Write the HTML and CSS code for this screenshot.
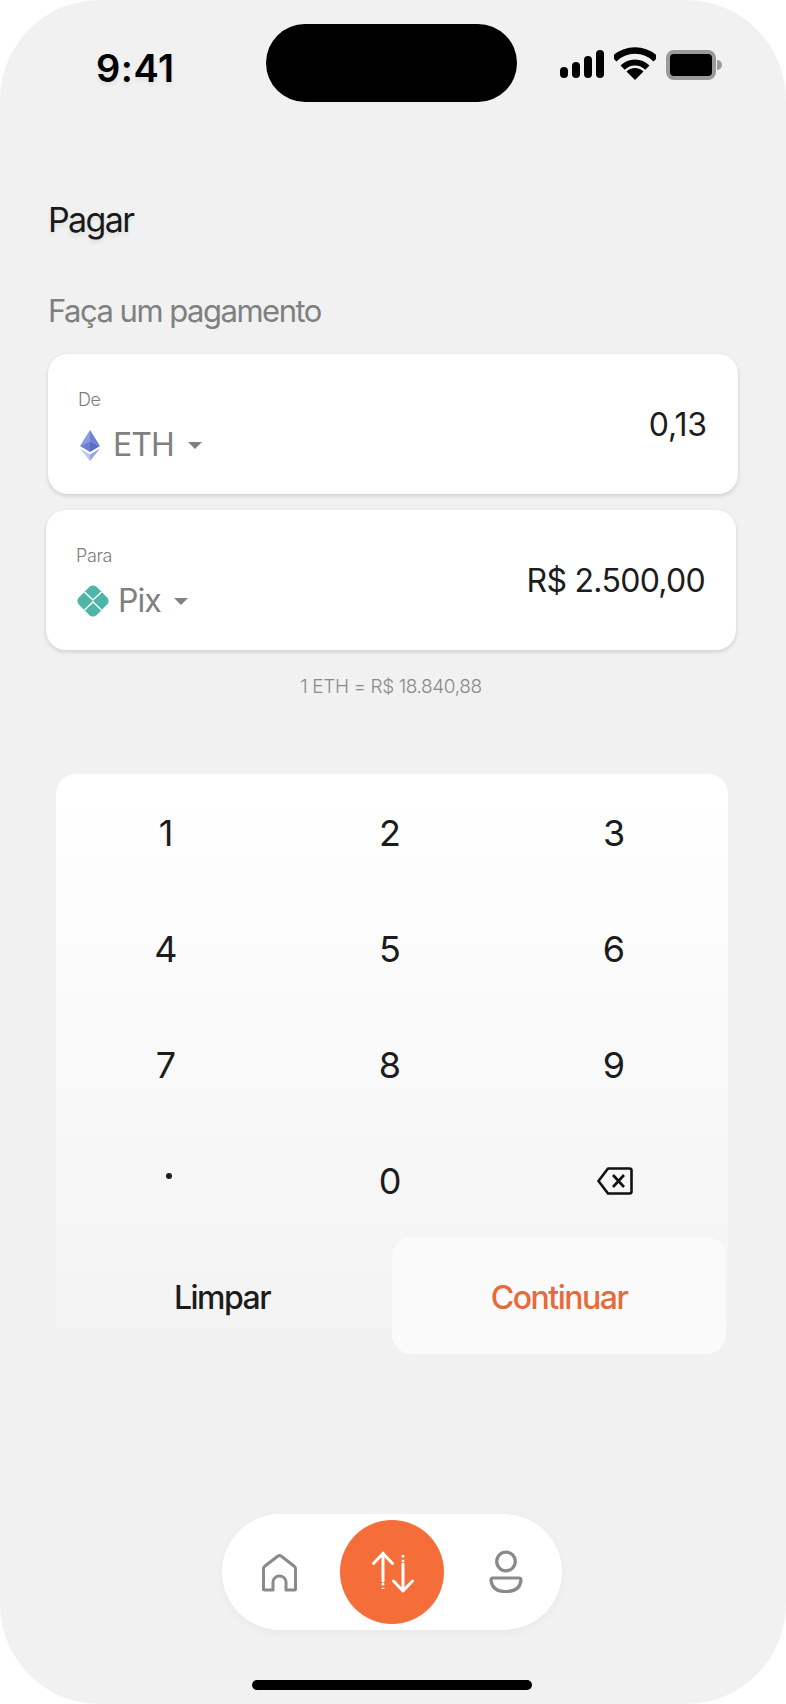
FILE: index.html
```html
<!DOCTYPE html>
<html lang="pt-BR">
<head>
<meta charset="utf-8">
<title>Pagar</title>
<link rel="stylesheet" href="styles.css">
</head>
<body>
<main class="phone">
  <div class="island"></div>
  <header class="status">
    <span class="time">9:41</span>
    <div class="status-icons">
      <svg class="signal" width="44" height="28" viewBox="0 0 44 28"><rect x="0" y="17" width="8" height="11" rx="4"/><rect x="12" y="12" width="8" height="16" rx="4"/><rect x="24" y="6" width="8" height="22" rx="4"/><rect x="36" y="0" width="8" height="28" rx="4"/></svg>
      <svg class="wifi" width="42" height="33" viewBox="0 0 42 33"><path d="M.14 12.14A29.5 29.5 0 0 1 41.86 12.14" fill="none" stroke="#000" stroke-width="6.5"/><path d="M8.63 20.63A17.5 17.5 0 0 1 33.37 20.63" fill="none" stroke="#000" stroke-width="6"/><path d="M21 33 12.5 24.5A12 12 0 0 1 29.5 24.5Z"/></svg>
      <div class="battery"></div>
      <div class="battery-nub"></div>
    </div>
  </header>

  <h1 class="title">Pagar</h1>
  <p class="subtitle">Faça um pagamento</p>

  <section class="card card-from">
    <div class="card-left">
      <span class="card-label">De</span>
      <div class="asset">
        <svg class="eth" width="20" height="31" viewBox="0 0 20 31"><path d="M10 0 0 16 10 11Z" fill="#8a9ae2"/><path d="M10 0 20 16 10 11Z" fill="#6f81d2"/><path d="M10 11 0 16 10 22Z" fill="#6c7ed4"/><path d="M10 11 20 16 10 22Z" fill="#5a6dc6"/><path d="M0 18.5 10 24.5V31Z" fill="#bcc6f0"/><path d="M20 18.5 10 24.5V31Z" fill="#94a3e4"/></svg>
        <span class="asset-name">ETH</span>
        <span class="caret"></span>
      </div>
    </div>
    <span class="amount">0,13</span>
  </section>

  <section class="card card-to">
    <div class="card-left">
      <span class="card-label">Para</span>
      <div class="asset asset-pix">
        <svg class="pix" width="32" height="32" viewBox="0 0 32 32"><rect x="3.5" y="3.5" width="25" height="25" rx="5" transform="rotate(45 16 16)" fill="#4db6a9"/><path d="M7.5 7 16 15 24.5 7M7.5 25 16 17 24.5 25" fill="none" stroke="#fff" stroke-width="1.5"/></svg>
        <span class="asset-name">Pix</span>
        <span class="caret"></span>
      </div>
    </div>
    <span class="amount">R$ 2.500,00</span>
  </section>

  <p class="rate">1 ETH = R$ 18.840,88</p>

  <section class="keypad">
    <div class="keys">
      <span class="key">1</span><span class="key">2</span><span class="key">3</span>
      <span class="key">4</span><span class="key">5</span><span class="key">6</span>
      <span class="key">7</span><span class="key">8</span><span class="key">9</span>
      <span class="key"><span class="dot"></span></span><span class="key">0</span>
      <span class="key">
        <svg class="backspace" width="36" height="28" viewBox="0 0 36 28"><path d="M1.5 14 11 1.5H32.5Q34.5 1.5 34.5 3.5V24.5Q34.5 26.5 32.5 26.5H11Z" fill="none" stroke="#111" stroke-width="2.6" stroke-linejoin="round"/><path d="M16 8 27 20M27 8 16 20" fill="none" stroke="#111" stroke-width="2.6"/></svg>
      </span>
    </div>
    <div class="actions">
      <span class="action">Limpar</span>
      <span class="action action-primary">Continuar</span>
    </div>
  </section>

  <nav class="tabbar">
    <svg width="40" height="44" viewBox="0 0 40 44"><path d="M3.5 19Q3.5 17 5 16L18 6Q19.5 5 21 6L34 16Q35.5 17 35.5 19V39Q35.5 40 34.5 40H26V32A6.5 6 0 0 0 13 32V40H4.5Q3.5 40 3.5 39Z" fill="none" stroke="#8a8a8a" stroke-width="3" stroke-linejoin="round"/></svg>
    <div class="tab-active">
      <svg width="44" height="44" viewBox="0 0 44 44"><g fill="none" stroke="#fff" stroke-width="3"><path d="M13 3V31M3.5 13.5 13 3.5 22.5 13.5M33 41V14M23.5 31 33 41 42.5 31" stroke-linecap="round" stroke-linejoin="round"/><path d="M13 33V39M33 5V12" stroke-width="2.6" stroke-dasharray="2.4 2.4"/></g></svg>
    </div>
    <svg class="tab-profile" width="36" height="44" viewBox="0 0 36 44"><g fill="none" stroke="#8a8a8a" stroke-width="3.2"><circle cx="17" cy="11.5" r="9.3"/><path d="M4 28H30Q32 28 32 30 31 41.5 17 41.5 3 41.5 2 30 2 28 4 28Z" stroke-linejoin="round"/></g></svg>
  </nav>

  <div class="home-bar"></div>
</main>
</body>
</html>
```
FILE: styles.css
```css
* { box-sizing: border-box; }
html, body { margin: 0; padding: 0; background: #fff; }
body { font-family: Inter, "Liberation Sans", sans-serif; color: #1c1c1c; }

.phone {
  position: relative;
  width: 786px;
  height: 1704px;
  background: #f1f1f1;
  border-radius: 100px;
  overflow: hidden;
  display: flex;
  flex-direction: column;
}

.island {
  position: absolute;
  left: 266px;
  top: 24px;
  width: 251px;
  height: 78px;
  background: #000;
  border-radius: 39px;
}

.status {
  height: 120px;
  padding: 46px 64px 0 96px;
  display: flex;
  justify-content: space-between;
  align-items: flex-start;
  flex: none;
}
.time {
  font-size: 38px;
  line-height: 44px;
  font-weight: 600;
  letter-spacing: .5px;
  color: #000;
  text-shadow: 0 3px 4px rgba(0,0,0,.08);
}
.status-icons { display: flex; align-items: flex-start; }
.signal { margin-top: 4px; margin-right: 10px; display: block; }
.wifi { margin-top: 1px; margin-right: 10px; display: block; }
.battery {
  width: 50px;
  height: 30px;
  margin-top: 4px;
  border: 4px solid #9a9a9a;
  border-radius: 8px;
  background: #000;
}
.battery-nub {
  width: 5px;
  height: 10px;
  margin: 14px 0 0 1px;
  background: #9a9a9a;
  border-radius: 0 5px 5px 0;
}

.title {
  margin: 78px 0 0 48px;
  font-size: 34px;
  line-height: 44px;
  font-weight: 400;
  letter-spacing: -1.6px;
  color: #1a1a1a;
  text-shadow: 0 3px 4px rgba(0,0,0,.08);
}
.subtitle {
  margin: 49px 0 0 48px;
  font-size: 31px;
  line-height: 40px;
  letter-spacing: -1.5px;
  color: #808080;
}

.card {
  width: 690px;
  height: 140px;
  flex: none;
  background: #fff;
  border-radius: 20px;
  box-shadow: 0 2px 4px rgba(0,0,0,.14);
  display: flex;
  justify-content: space-between;
  align-items: center;
  padding: 0 31px 0 30px;
}
.card-from { margin: 23px 0 0 48px; }
.card-to { margin: 16px 0 0 46px; }
.card-left { display: flex; flex-direction: column; padding-top: 4px; }
.card-label {
  font-size: 18px;
  line-height: 22px;
  font-weight: 300;
  letter-spacing: -.4px;
  color: #7d7d7d;
}
.asset { display: flex; align-items: center; margin-top: 16px; height: 36px; }
.asset-name {
  font-size: 32px;
  line-height: 36px;
  letter-spacing: -1px;
  color: #808080;
  margin-left: 13px;
}
.asset-pix .asset-name { margin-left: 9px; }
.eth { margin-left: 2px; display: block; }
.pix { margin-left: 1px; display: block; }
.caret {
  width: 0;
  height: 0;
  margin-left: 14px;
  border-left: 7px solid transparent;
  border-right: 7px solid transparent;
  border-top: 7px solid #808080;
}
.asset-pix .caret { margin-left: 13px; }
.amount {
  font-size: 32px;
  line-height: 40px;
  font-weight: 430;
  letter-spacing: -.7px;
  color: #1c1c1c;
  padding-top: 2px;
}
.card-from .amount { letter-spacing: -.1px; }

.rate {
  margin: 24px 0 0;
  text-align: center;
  width: 782px;
  font-size: 19px;
  line-height: 26px;
  font-weight: 300;
  letter-spacing: -.4px;
  color: #8a8a8a;
}

.keypad {
  width: 672px;
  height: 554px;
  flex: none;
  margin: 74px 0 0 56px;
  border-radius: 20px 20px 0 0;
  background: linear-gradient(#fff 0%, #f3f3f3 100%);
}
.keys {
  display: grid;
  grid-template-columns: repeat(3, 224px);
  grid-auto-rows: 116px;
  margin-left: -2px;
  padding-top: 1px;
}
.key {
  display: flex;
  align-items: center;
  justify-content: center;
  font-size: 36px;
  line-height: 44px;
  font-weight: 430;
  color: #1c1c1c;
}
.dot {
  width: 6px;
  height: 6px;
  margin: -10px 0 0 6px;
  border-radius: 50%;
  background: #1c1c1c;
}
.backspace { margin-left: 2px; }
.actions {
  display: grid;
  grid-template-columns: 332px 334px;
  column-gap: 4px;
}
.action {
  height: 117px;
  display: flex;
  align-items: center;
  justify-content: center;
  font-size: 32px;
  font-weight: 450;
  letter-spacing: -1.5px;
  color: #1c1c1c;
}
.action-primary {
  background: #fafafa;
  border-radius: 20px;
  color: #e8693a;
  margin-top: -2px;
  padding-top: 4px;
}

.tabbar {
  width: 340px;
  height: 116px;
  flex: none;
  margin: 186px 0 0 222px;
  border-radius: 58px;
  background: #fff;
  box-shadow: 0 3px 8px rgba(0,0,0,.04);
  display: flex;
  align-items: center;
  gap: 40px;
  padding-left: 38px;
}
.tab-active {
  width: 104px;
  height: 104px;
  border-radius: 50%;
  background: #f56d39;
  display: flex;
  align-items: center;
  justify-content: center;
}
.tab-profile { margin-left: 5px; }

.home-bar {
  width: 280px;
  height: 10px;
  flex: none;
  margin: 50px 0 0 252px;
  border-radius: 5px;
  background: #000;
}
```
